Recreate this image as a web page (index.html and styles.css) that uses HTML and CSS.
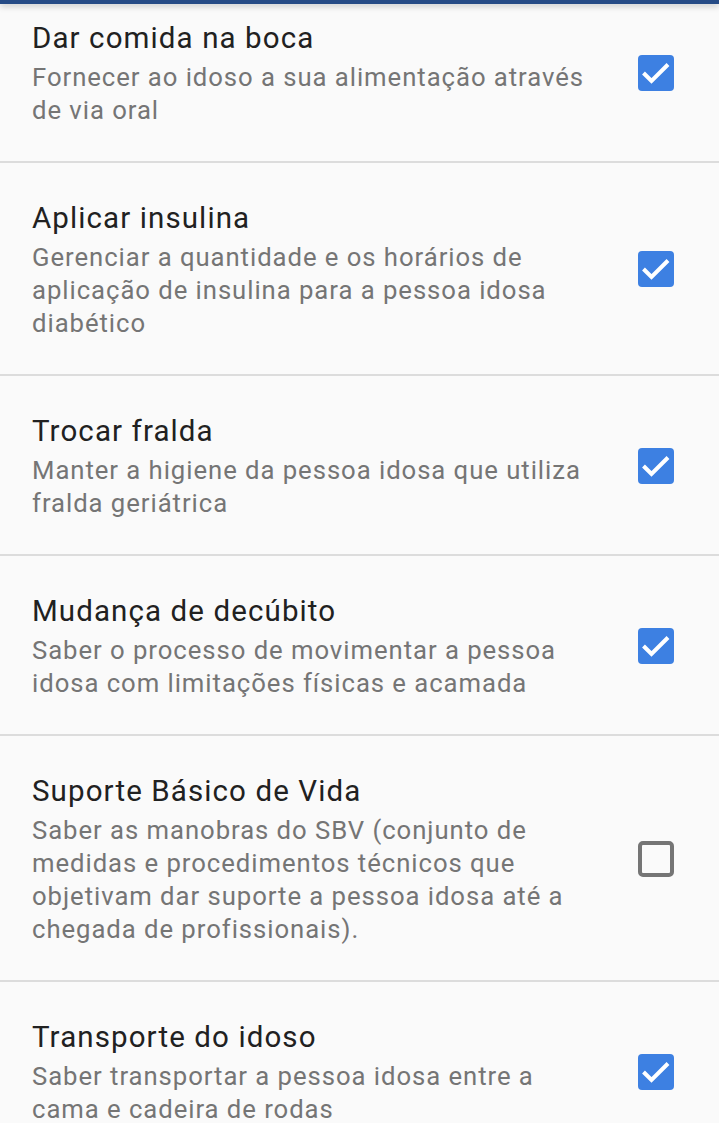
FILE: index.html
```html
<!DOCTYPE html>
<html lang="pt-BR">
<head>
  <meta charset="UTF-8" />
  <meta name="viewport" content="width=device-width, initial-scale=1.0"/>
  <title>Habilidades</title>
  <link rel="stylesheet" href="styles.css">
</head>
<body>
  <div class="appbar"></div>

  <ul class="prefs">
    <li class="pref">
      <div class="pref-text">
        <div class="pref-title">Dar comida na boca</div>
        <div class="pref-summary">Fornecer ao idoso a sua alimentação através de via oral</div>
      </div>
      <span class="check on">
        <svg viewBox="0 0 36 36" width="36" height="36"><rect width="36" height="36" rx="4" fill="#3d80e2"/><polyline points="5.5,18 13.5,26 30,9.5" fill="none" stroke="#fff" stroke-width="4"/></svg>
      </span>
    </li>
    <li class="pref">
      <div class="pref-text">
        <div class="pref-title">Aplicar insulina</div>
        <div class="pref-summary">Gerenciar a quantidade e os horários de aplicação de insulina para a pessoa idosa diabético</div>
      </div>
      <span class="check on">
        <svg viewBox="0 0 36 36" width="36" height="36"><rect width="36" height="36" rx="4" fill="#3d80e2"/><polyline points="5.5,18 13.5,26 30,9.5" fill="none" stroke="#fff" stroke-width="4"/></svg>
      </span>
    </li>
    <li class="pref">
      <div class="pref-text">
        <div class="pref-title">Trocar fralda</div>
        <div class="pref-summary">Manter a higiene da pessoa idosa que utiliza fralda geriátrica</div>
      </div>
      <span class="check on">
        <svg viewBox="0 0 36 36" width="36" height="36"><rect width="36" height="36" rx="4" fill="#3d80e2"/><polyline points="5.5,18 13.5,26 30,9.5" fill="none" stroke="#fff" stroke-width="4"/></svg>
      </span>
    </li>
    <li class="pref">
      <div class="pref-text">
        <div class="pref-title">Mudança de decúbito</div>
        <div class="pref-summary">Saber o processo de movimentar a pessoa idosa com limitações físicas e acamada</div>
      </div>
      <span class="check on">
        <svg viewBox="0 0 36 36" width="36" height="36"><rect width="36" height="36" rx="4" fill="#3d80e2"/><polyline points="5.5,18 13.5,26 30,9.5" fill="none" stroke="#fff" stroke-width="4"/></svg>
      </span>
    </li>
    <li class="pref">
      <div class="pref-text">
        <div class="pref-title">Suporte Básico de Vida</div>
        <div class="pref-summary">Saber as manobras do SBV (conjunto de medidas e procedimentos técnicos que objetivam dar suporte a pessoa idosa até a chegada de profissionais).</div>
      </div>
      <span class="check">
        <svg viewBox="0 0 36 36" width="36" height="36"><rect x="2" y="2" width="32" height="32" rx="3" fill="none" stroke="#757575" stroke-width="4"/></svg>
      </span>
    </li>
    <li class="pref">
      <div class="pref-text">
        <div class="pref-title">Transporte do idoso</div>
        <div class="pref-summary">Saber transportar a pessoa idosa entre a cama e cadeira de rodas</div>
      </div>
      <span class="check on">
        <svg viewBox="0 0 36 36" width="36" height="36"><rect width="36" height="36" rx="4" fill="#3d80e2"/><polyline points="5.5,18 13.5,26 30,9.5" fill="none" stroke="#fff" stroke-width="4"/></svg>
      </span>
    </li>
  </ul>
</body>
</html>
```

FILE: styles.css
```css
body {
  margin: 0;
  background-color: #fafafa;
  font-family: Roboto, "Noto Sans", sans-serif;
  overflow: hidden;
}

.appbar {
  position: relative;
  z-index: 1;
  height: 4px;
  background-color: #264b86;
  box-shadow: 0 2px 6px rgba(0, 0, 0, 0.25);
}

.prefs {
  list-style: none;
  margin: -21px 0 0 0; /* list is scrolled a little under the app bar */
  padding: 0;
}

.pref {
  display: flex;
  align-items: center;
  padding: 35px 45px 34px 32px;
  border-bottom: 2px solid #dcdcdc;
}

.pref-text {
  flex: 1;
  max-width: 568px;
}

.pref-title {
  font-size: 29.5px;
  line-height: 40px;
  letter-spacing: 1.1px;
  color: #212121;
}

.pref-summary {
  margin-top: 3px;
  font-size: 25.7px;
  line-height: 33px;
  letter-spacing: 0.95px;
  color: #757575;
}

.check {
  margin-left: auto;
  width: 36px;
  height: 36px;
}

.check svg {
  display: block;
}
```
